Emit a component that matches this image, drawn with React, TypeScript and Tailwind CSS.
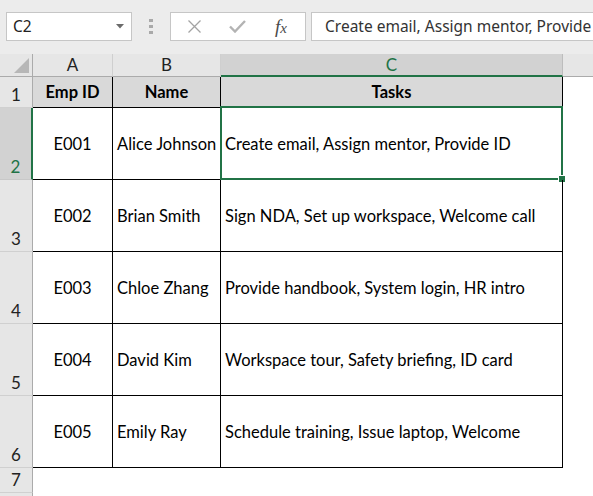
import React from "react";

const cellFont = { fontFamily: "Lato, 'Liberation Sans', sans-serif" };

const rows = [
  { n: 2, id: "E001", name: "Alice Johnson", tasks: "Create email, Assign mentor, Provide ID" },
  { n: 3, id: "E002", name: "Brian Smith", tasks: "Sign NDA, Set up workspace, Welcome call" },
  { n: 4, id: "E003", name: "Chloe Zhang", tasks: "Provide handbook, System login, HR intro" },
  { n: 5, id: "E004", name: "David Kim", tasks: "Workspace tour, Safety briefing, ID card" },
  { n: 6, id: "E005", name: "Emily Ray", tasks: "Schedule training, Issue laptop, Welcome" },
];

function RowHead({ n, selected }: { n: number; selected?: boolean }) {
  return (
    <div
      className={
        selected
          ? "flex items-end justify-center bg-[#d2d2d2] border-r-2 border-r-[#217346] border-b border-b-[#c8c8c8] text-[#217346] text-[17px] leading-[22px] pb-[1px]"
          : "flex items-end justify-center bg-[#e6e6e6] border-r border-r-[#ababab] border-b border-b-[#d0d0d0] text-[#222] text-[17px] leading-[22px] pb-[1px]"
      }
    >
      {n}
    </div>
  );
}

export default function App() {
  return (
    <div className="w-[593px] h-[496px] overflow-hidden bg-[#ececec] flex flex-col" style={cellFont}>
      {/* formula bar */}
      <div className="h-[54px] shrink-0 flex items-start pt-[12px] pl-[6px]">
        <div
          className="w-[126px] h-[29px] bg-white border border-[#c6c6c6] flex items-center justify-between pl-[6px] pr-[7px] text-[15.5px] text-[#222]"
          style={{ fontFamily: "'Noto Sans', 'Open Sans', sans-serif" }}
        >
          <span>C2</span>
          <svg width="8" height="5" viewBox="0 0 8 5">
            <polygon points="0,0 8,0 4,4.5" fill="#6b6b6b" />
          </svg>
        </div>
        <div className="w-[38px] h-[29px] flex flex-col items-center justify-center gap-[3px]">
          <div className="w-[4px] h-[3px] bg-[#a9a9a9]" />
          <div className="w-[4px] h-[3px] bg-[#a9a9a9]" />
          <div className="w-[4px] h-[3px] bg-[#a9a9a9]" />
        </div>
        <div className="w-[136px] h-[29px] bg-white border border-[#c6c6c6] flex items-center">
          <div className="w-[44px] flex justify-center pl-[2px]">
            <svg width="15" height="13" viewBox="0 0 15 13">
              <path d="M1.5 0.5 L13.5 12.5 M13.5 0.5 L1.5 12.5" stroke="#a3a3a3" strokeWidth="1.3" fill="none" />
            </svg>
          </div>
          <div className="w-[44px] flex justify-center">
            <svg width="17" height="13" viewBox="0 0 17 13">
              <path d="M1 6.5 L6 11.5 L16 1" stroke="#b3b3b3" strokeWidth="2.4" fill="none" />
            </svg>
          </div>
          <div
            className="w-[44px] flex justify-center italic text-[19px] text-[#4a4a4a] leading-none"
            style={{ fontFamily: "'Liberation Serif', 'DejaVu Serif', serif" }}
          >
            f<span className="text-[15px] self-end">x</span>
          </div>
        </div>
        <div
          className="ml-[5px] flex-1 h-[29px] bg-white border border-[#c6c6c6] border-r-0 flex items-center pl-[13px] text-[15.5px] text-[#333] whitespace-nowrap overflow-hidden"
          style={{ fontFamily: "'Noto Sans', 'Open Sans', sans-serif" }}
        >
          Create email, Assign mentor, Provide ID
        </div>
      </div>

      {/* sheet */}
      <div className="flex-1 grid grid-cols-[33px_80px_108px_342px_1fr] grid-rows-[23px_31px_72px_72px_72px_72px_72px_25px_1fr] bg-white">
        {/* column header row */}
        <div className="bg-[#e6e6e6] border-r border-r-[#ababab] border-b border-b-[#ababab] flex items-end justify-end pr-[3px] pb-[3px]">
          <svg width="15" height="15" viewBox="0 0 15 15">
            <polygon points="15,0 15,15 0,15" fill="#b7b7b7" />
          </svg>
        </div>
        <div className="bg-[#e6e6e6] border-r border-r-[#cfcfcf] border-b border-b-[#ababab] flex items-center justify-center text-[17px] text-[#222]">A</div>
        <div className="bg-[#e6e6e6] border-r border-r-[#cfcfcf] border-b border-b-[#ababab] flex items-center justify-center text-[17px] text-[#222]">B</div>
        <div className="bg-[#d2d2d2] border-r border-r-[#bdbdbd] border-b-2 border-b-[#217346] flex items-center justify-center text-[17px] text-[#217346]">C</div>
        <div className="bg-[#e6e6e6] border-b border-b-[#ababab]" />

        {/* row 1 */}
        <RowHead n={1} />
        <div className="bg-[#d9d9d9] border-r border-b border-black flex items-center justify-center font-bold text-[16.5px] text-black">Emp ID</div>
        <div className="bg-[#d9d9d9] border-r border-b border-black flex items-center justify-center font-bold text-[16.5px] text-black">Name</div>
        <div className="bg-[#d9d9d9] border-r border-b border-black flex items-center justify-center font-bold text-[16.5px] text-black">Tasks</div>
        <div />

        {rows.map((r) => (
          <React.Fragment key={r.n}>
            <RowHead n={r.n} selected={r.n === 2} />
            <div className="border-r border-b border-black flex items-center justify-center pt-[2px] text-[16.5px] text-black">{r.id}</div>
            <div className="border-r border-b border-black flex items-center pl-[4px] pt-[2px] text-[16.5px] text-black whitespace-nowrap">{r.name}</div>
            <div className="relative border-r border-b border-black flex items-center pl-[4px] pt-[2px] text-[16.5px] text-black whitespace-nowrap">
              {r.tasks}
              {r.n === 2 && (
                <div className="absolute -top-[2px] -left-[1px] -right-[1px] -bottom-[1px] border-2 border-[#217346]">
                  <div className="absolute -right-[4px] -bottom-[4px] w-[6px] h-[6px] bg-[#217346] outline outline-1 outline-white" />
                </div>
              )}
            </div>
            <div />
          </React.Fragment>
        ))}

        {/* row 7 */}
        <RowHead n={7} />
        <div />
        <div />
        <div />
        <div />

        {/* row 8 (partial) */}
        <div className="bg-[#e6e6e6] border-r border-r-[#ababab]" />
        <div />
        <div />
        <div />
        <div />
      </div>
    </div>
  );
}
